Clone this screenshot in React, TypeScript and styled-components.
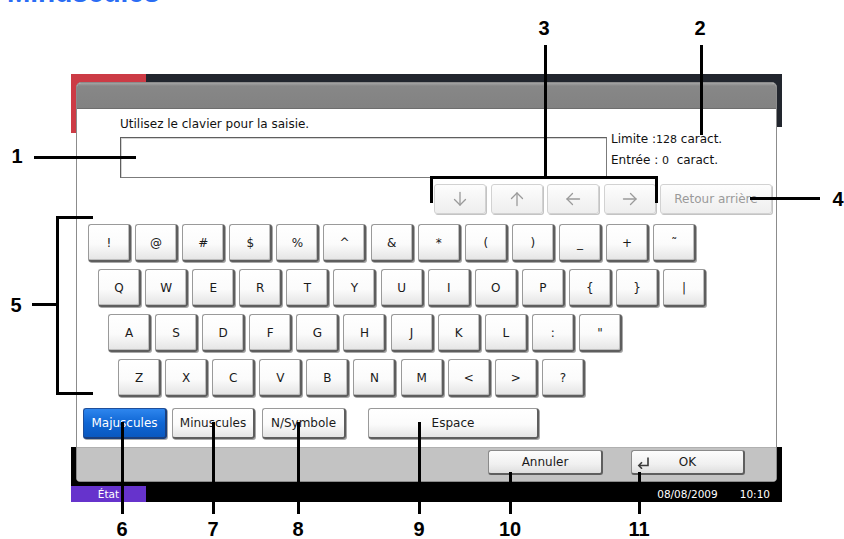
import React from "react";
import styled, { createGlobalStyle } from "styled-components";

const GlobalStyle = createGlobalStyle`
  html, body { margin: 0; padding: 0; background: #fff; }
  body { font-family: "DejaVu Sans", Verdana, sans-serif; }
  * { box-sizing: border-box; }
`;

const Page = styled.div`
  position: relative;
  width: 844px;
  height: 539px;
  overflow: hidden;
  background: #fff;
`;

const Heading = styled.h1`
  margin: -21px 0 0 7px;
  height: 28px;
  font: bold 28px/28px "Liberation Sans", Arial, sans-serif;
  color: #2a6df4;
  white-space: nowrap;
`;

const Screen = styled.div`
  margin: 67px 0 0 71px;
  width: 711px;
  height: 428px;
  display: flex;
  flex-direction: column;
  background:
    linear-gradient(#cc3b45, #cc3b45) 0 0 / 75px 59px no-repeat,
    linear-gradient(to bottom, #22262e 0, #22262e 53px, #ffffff 53px, #ffffff 373px, #000 373px);
`;

const Window = styled.div`
  margin: 8px 5px 0;
  height: 400px;
  display: flex;
  flex-direction: column;
  border: 1px solid #8c8c8c;
  border-radius: 5px 5px 4px 4px;
  overflow: hidden;
  background: #fff;
`;

const WindowHeader = styled.div`
  height: 26px;
  flex: none;
  background: linear-gradient(#a4a4a4, #878787 3px, #828282);
  border-bottom: 1px solid #6e6e6e;
`;

const Content = styled.div`
  height: 338px;
  flex: none;
  display: flex;
  flex-direction: column;
  padding: 8px 4px 0 0;
  background: #fff;
`;

const Prompt = styled.div`
  margin-left: 43px;
  font-size: 12px;
  line-height: 15px;
  color: #111;
`;

const InputRow = styled.div`
  display: flex;
  margin: 5px 0 0 43px;
`;

const TextInput = styled.div`
  width: 487px;
  height: 41px;
  border: 1px solid #7b7b7b;
  border-top-color: #5f5f5f;
  border-left-color: #5f5f5f;
  background: #fff;
  box-shadow: inset 1px 1px 0 #d4d4d4;
`;

const Info = styled.div`
  margin: -8px 0 0 4px;
  font-size: 12px;
  line-height: 20px;
  color: #111;
  white-space: nowrap;
`;

const SmallNum = styled.span`
  font-size: 11px;
`;

const ArrowRow = styled.div`
  display: flex;
  justify-content: flex-end;
  gap: 4.5px;
  margin-top: 6px;
`;

const DisabledButton = styled.div<{ $w: number }>`
  width: ${(p) => p.$w}px;
  height: 30px;
  display: flex;
  align-items: center;
  justify-content: center;
  border: 1px solid #d2d2d2;
  border-radius: 3px;
  background: linear-gradient(#fdfdfd, #eeeeee);
  box-shadow: 1px 1px 0 #c4c4c4;
  color: #9a9a9a;
  font-size: 12px;
  white-space: nowrap;
`;

const Keyboard = styled.div`
  display: flex;
  flex-direction: column;
  gap: 7px;
  margin-top: 10px;
`;

const KeyRow = styled.div<{ $indent: number }>`
  display: flex;
  gap: 4.1px;
  padding-left: ${(p) => p.$indent}px;
`;

const Key = styled.div`
  width: 43px;
  height: 38px;
  display: flex;
  align-items: center;
  justify-content: center;
  border: 1px solid #9a9a9a;
  border-right: 2px solid #5e5e5e;
  border-bottom: 2px solid #5e5e5e;
  border-radius: 3px;
  background: linear-gradient(#ffffff, #fbfbfb 55%, #e4e4e4);
  box-shadow: inset -1px -1px 0 #bdbdbd, 1px 1px 0 #a8a8a8;
  font-size: 12px;
  color: #1a1a1a;
`;

const ModeRow = styled.div`
  display: flex;
  margin: 11px 0 0 6px;
`;

const ModeButton = styled.div<{ $w: number; $gap: number; $active?: boolean }>`
  width: ${(p) => p.$w}px;
  height: 31px;
  margin-right: ${(p) => p.$gap}px;
  display: flex;
  align-items: center;
  justify-content: center;
  border: 1px solid ${(p) => (p.$active ? "#1f4f9a" : "#9a9a9a")};
  border-right: 2px solid ${(p) => (p.$active ? "#1b3f7c" : "#5e5e5e")};
  border-bottom: 2px solid ${(p) => (p.$active ? "#1b3f7c" : "#5e5e5e")};
  border-radius: 3px;
  background: ${(p) =>
    p.$active
      ? "linear-gradient(#2e86ee, #0f66d4 50%, #0a58c0)"
      : "linear-gradient(#ffffff, #fbfbfb 55%, #e4e4e4)"};
  box-shadow: 1px 1px 0 #a8a8a8;
  color: ${(p) => (p.$active ? "#fff" : "#1a1a1a")};
  font-size: 12px;
  white-space: nowrap;
`;

const Footer = styled.div`
  flex: 1;
  display: flex;
  justify-content: flex-end;
  align-items: flex-start;
  gap: 28px;
  padding: 2px 31px 0 0;
  background: #c3c3c3;
  border-top: 1px solid #b0b0b0;
`;

const FooterButton = styled.div<{ $w: number }>`
  position: relative;
  width: ${(p) => p.$w}px;
  height: 25px;
  display: flex;
  align-items: center;
  justify-content: center;
  border: 1px solid #8a8a8a;
  border-right: 2px solid #5e5e5e;
  border-bottom: 2px solid #5e5e5e;
  border-radius: 3px;
  background: linear-gradient(#fdfdfd, #f0f0f0 60%, #dedede);
  font-size: 12px;
  color: #1a1a1a;
`;

const ReturnIcon = styled.svg`
  position: absolute;
  left: 5px;
  top: 6px;
`;

const StatusBar = styled.div`
  margin-top: 4px;
  height: 16px;
  display: flex;
  align-items: center;
  font-size: 10.5px;
  color: #fff;
`;

const StatusTab = styled.div`
  width: 75px;
  height: 16px;
  display: flex;
  align-items: center;
  justify-content: center;
  background: #6633cc;
`;

const Clock = styled.div`
  margin-left: auto;
  padding-right: 12px;
  display: flex;
  gap: 22px;
`;

const Num = styled.span<{ $x: number; $y: number }>`
  position: absolute;
  left: ${(p) => p.$x}px;
  top: ${(p) => p.$y}px;
  transform: translateX(-50%);
  font: bold 20px/16px "Liberation Sans", Arial, sans-serif;
  color: #000;
`;

const Line = styled.div<{ $x: number; $y: number; $w: number; $h: number }>`
  position: absolute;
  left: ${(p) => p.$x}px;
  top: ${(p) => p.$y}px;
  width: ${(p) => p.$w}px;
  height: ${(p) => p.$h}px;
  background: #000;
`;

const Arrow = ({ dir }: { dir: "down" | "up" | "left" | "right" }) => {
  const rot = { down: 0, up: 180, left: 90, right: -90 }[dir];
  return (
    <svg width="16" height="16" viewBox="0 0 16 16" style={{ transform: `rotate(${rot}deg)` }}>
      <g fill="none" stroke="#9a9a9a" strokeWidth="1.3" strokeLinecap="round" strokeLinejoin="round">
        <line x1="8" y1="1.5" x2="8" y2="14" />
        <polyline points="2.5,8.5 8,14 13.5,8.5" />
      </g>
    </svg>
  );
};

const rows: { indent: number; keys: string[] }[] = [
  { indent: 11, keys: ["!", "@", "#", "$", "%", "^", "&", "*", "(", ")", "_", "+", "˜"] },
  { indent: 21, keys: ["Q", "W", "E", "R", "T", "Y", "U", "I", "O", "P", "{", "}", "|"] },
  { indent: 31, keys: ["A", "S", "D", "F", "G", "H", "J", "K", "L", ":", "\""] },
  { indent: 41, keys: ["Z", "X", "C", "V", "B", "N", "M", "<", ">", "?"] },
];

const nums: [string, number, number][] = [
  ["1", 17, 148],
  ["2", 700, 20],
  ["3", 544, 20],
  ["4", 838, 191],
  ["5", 16, 297],
  ["6", 122, 521],
  ["7", 213, 521],
  ["8", 298, 521],
  ["9", 419, 521],
  ["10", 510, 521],
  ["11", 639, 521],
];

const lines: [number, number, number, number][] = [
  [34, 156, 102, 3],
  [700, 45, 3, 90],
  [544, 45, 3, 133],
  [430, 176, 228, 3],
  [430, 176, 3, 27],
  [655, 176, 3, 27],
  [750, 197, 70, 3],
  [32, 303, 26, 3],
  [56, 216, 3, 179],
  [56, 216, 37, 3],
  [56, 392, 37, 3],
  [121, 422, 3, 92],
  [212, 422, 3, 92],
  [297, 422, 3, 92],
  [418, 422, 3, 92],
  [509, 472, 3, 42],
  [638, 472, 3, 42],
];

export default function App() {
  return (
    <Page>
      <GlobalStyle />
      <Heading>Minuscules</Heading>
      <Screen>
        <Window>
          <WindowHeader />
          <Content>
            <Prompt>Utilisez le clavier pour la saisie.</Prompt>
            <InputRow>
              <TextInput />
              <Info>
                <div>
                  Limite :<SmallNum>128</SmallNum> caract.
                </div>
                <div>
                  Entrée : <SmallNum>0</SmallNum>&nbsp; caract.
                </div>
              </Info>
            </InputRow>
            <ArrowRow>
              <DisabledButton $w={52}>
                <Arrow dir="down" />
              </DisabledButton>
              <DisabledButton $w={52}>
                <Arrow dir="up" />
              </DisabledButton>
              <DisabledButton $w={52}>
                <Arrow dir="left" />
              </DisabledButton>
              <DisabledButton $w={52}>
                <Arrow dir="right" />
              </DisabledButton>
              <DisabledButton $w={112}>Retour arrière</DisabledButton>
            </ArrowRow>
            <Keyboard>
              {rows.map((r, i) => (
                <KeyRow key={i} $indent={r.indent}>
                  {r.keys.map((k) => (
                    <Key key={k}>{k}</Key>
                  ))}
                </KeyRow>
              ))}
            </Keyboard>
            <ModeRow>
              <ModeButton $w={84} $gap={5} $active>
                Majuscules
              </ModeButton>
              <ModeButton $w={83} $gap={7}>
                Minuscules
              </ModeButton>
              <ModeButton $w={84} $gap={22}>
                N/Symbole
              </ModeButton>
              <ModeButton $w={171} $gap={0}>
                Espace
              </ModeButton>
            </ModeRow>
          </Content>
          <Footer>
            <FooterButton $w={115}>Annuler</FooterButton>
            <FooterButton $w={114}>
              <ReturnIcon width="13" height="12" viewBox="0 0 13 12">
                <g fill="none" stroke="#3a3a3a" strokeWidth="1.6" strokeLinejoin="miter">
                  <polyline points="11,0.5 11,8.5 2,8.5" />
                  <polyline points="5,5.3 1.8,8.5 5,11.7" />
                </g>
              </ReturnIcon>
              OK
            </FooterButton>
          </Footer>
        </Window>
        <StatusBar>
          <StatusTab>État</StatusTab>
          <Clock>
            <span>08/08/2009</span>
            <span>10:10</span>
          </Clock>
        </StatusBar>
      </Screen>
      {lines.map(([x, y, w, h], i) => (
        <Line key={i} $x={x} $y={y} $w={w} $h={h} />
      ))}
      {nums.map(([t, x, y]) => (
        <Num key={t} $x={x} $y={y}>
          {t}
        </Num>
      ))}
    </Page>
  );
}
